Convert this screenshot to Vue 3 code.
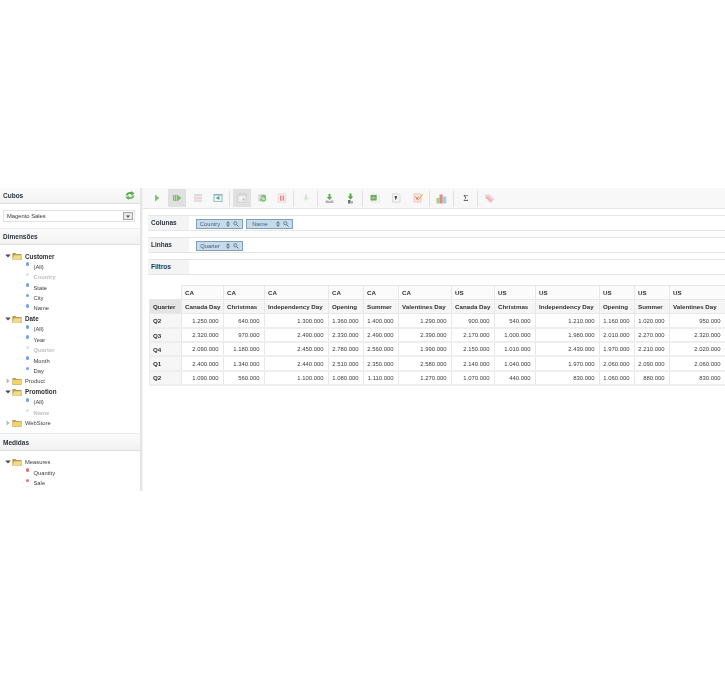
<script setup>
const treeTop = [
  { type: 'open', label: 'Customer', bold: true },
  { type: 'dim', label: '(All)' },
  { type: 'dim', label: 'Country', off: true },
  { type: 'dim', label: 'State' },
  { type: 'dim', label: 'City' },
  { type: 'dim', label: 'Name' },
  { type: 'open', label: 'Date', bold: true },
  { type: 'dim', label: '(All)' },
  { type: 'dim', label: 'Year' },
  { type: 'dim', label: 'Quarter', off: true },
  { type: 'dim', label: 'Month' },
  { type: 'dim', label: 'Day' },
  { type: 'closed', label: 'Product' },
  { type: 'open', label: 'Promotion', bold: true },
  { type: 'dim', label: '(All)' },
  { type: 'dim', label: 'Name', off: true },
  { type: 'closed', label: 'WebStore' }
]
const treeMeasures = [
  { type: 'open', label: 'Measures' },
  { type: 'mea', label: 'Quantity' },
  { type: 'mea', label: 'Sale' }
]
const cols = [
  { c: 'CA', n: 'Canada Day', w: 42 },
  { c: 'CA', n: 'Christmas', w: 41 },
  { c: 'CA', n: 'Independency Day', w: 64 },
  { c: 'CA', n: 'Opening', w: 35 },
  { c: 'CA', n: 'Summer', w: 35 },
  { c: 'CA', n: 'Valentines Day', w: 53 },
  { c: 'US', n: 'Canada Day', w: 43 },
  { c: 'US', n: 'Christmas', w: 41 },
  { c: 'US', n: 'Independency Day', w: 64 },
  { c: 'US', n: 'Opening', w: 35 },
  { c: 'US', n: 'Summer', w: 35 },
  { c: 'US', n: 'Valentines Day', w: 56 }
]
const rows = [
  ['Q2', '1.250.000', '640.000', '1.300.000', '1.360.000', '1.400.000', '1.290.000', '900.000', '540.000', '1.210.000', '1.160.000', '1.020.000', '950.000'],
  ['Q3', '2.320.000', '970.000', '2.490.000', '2.330.000', '2.490.000', '2.390.000', '2.170.000', '1.000.000', '1.980.000', '2.010.000', '2.270.000', '2.320.000'],
  ['Q4', '2.090.000', '1.180.000', '2.450.000', '2.780.000', '2.560.000', '1.990.000', '2.150.000', '1.010.000', '2.430.000', '1.970.000', '2.210.000', '2.020.000'],
  ['Q1', '2.400.000', '1.340.000', '2.440.000', '2.510.000', '2.350.000', '2.580.000', '2.140.000', '1.040.000', '1.970.000', '2.060.000', '2.090.000', '2.060.000'],
  ['Q2', '1.090.000', '560.000', '1.100.000', '1.080.000', '1.110.000', '1.270.000', '1.070.000', '440.000', '830.000', '1.060.000', '880.000', '830.000']
]
const shelves = [
  { label: 'Colunas', chips: ['Country', 'Name'] },
  { label: 'Linhas', chips: ['Quarter'] },
  { label: 'Filtros', chips: [] }
]
</script>

<template>
  <div class="page">
    <div class="app">
      <aside class="side">
        <div class="head first">
          <span>Cubos</span>
          <svg class="sync" width="10" height="9" viewBox="0 0 11 10">
            <path d="M.6 5C1 2 4 .4 6.800 1.200V0l3.800 2.800-3.800 2.400V3.600C5 3 3.400 3.400 2.800 5z" fill="#5cab4e" />
            <path d="M10.400 5C10 8 7 9.600 4.200 8.800V10L.4 7.200l3.800-2.400v1.600C6 7 7.600 6.600 8.200 5z" fill="#6db55f" />
          </svg>
        </div>
        <div class="cube">
          <div class="select">
            <span>Magento Sales</span>
            <i class="drop"><svg width="4" height="3" viewBox="0 0 5 4"><path d="M0 .5h5L2.500 3.500z" fill="#444" /></svg></i>
          </div>
        </div>
        <div class="head"><span>Dimensões</span></div>
        <ul class="tree dims">
          <li v-for="(n, i) in treeTop" :key="i" :class="['node', n.type, { off: n.off, bold: n.bold }]">
            <template v-if="n.type === 'open' || n.type === 'closed'">
              <svg class="arrow" width="6" height="6" viewBox="0 0 6 6">
                <path v-if="n.type === 'open'" d="M.3 1.500h5.400L3 4.600z" fill="#4a4a4a" />
                <path v-else d="M1.600.4 4.600 3 1.600 5.600z" fill="#b4b4b4" />
              </svg>
              <svg class="folder" width="10" height="8" viewBox="0 0 10 8">
                <path d="M.4 1h3l.8.9h5.400V7.700H.4z" fill="#b99a4a" />
                <path v-if="n.type === 'open'" d="M2 3.200h7.800L8.400 7.700H.6z" fill="#f3d98a" />
                <path v-else d="M.9 2.800h8.200v4.600H.9z" fill="#f1d26b" />
              </svg>
            </template>
            <i v-else class="dot"></i>
            <span>{{ n.label }}</span>
          </li>
        </ul>
        <div class="head gap"><span>Medidas</span></div>
        <ul class="tree meas">
          <li v-for="(n, i) in treeMeasures" :key="i" :class="['node', n.type]">
            <template v-if="n.type === 'open'">
              <svg class="arrow" width="6" height="6" viewBox="0 0 6 6"><path d="M.3 1.500h5.400L3 4.600z" fill="#4a4a4a" /></svg>
              <svg class="folder" width="10" height="8" viewBox="0 0 10 8">
                <path d="M.4 1h3l.8.9h5.400V7.700H.4z" fill="#b99a4a" />
                <path d="M2 3.200h7.800L8.400 7.700H.6z" fill="#f3d98a" />
              </svg>
            </template>
            <i v-else class="dot"></i>
            <span>{{ n.label }}</span>
          </li>
        </ul>
      </aside>

      <i class="divider"></i>

      <main class="main">
        <div class="toolbar">
          <div class="grp g1">
            <button class="btn"><svg width="10" height="10" viewBox="0 0 10 10"><path d="M3 1.500 7.500 5 3 8.500z" fill="#7cc76c" /></svg></button>
            <button class="btn on"><svg width="10" height="10" viewBox="0 0 10 10"><path d="M1 2h1.400v6H1zM3 2h1.400v6H3zM5 1.500 9.400 5 5 8.500z" fill="#74c064" /></svg></button>
            <button class="btn"><svg width="10" height="10" viewBox="0 0 10 10"><path d="M1 1h8v2.400H1z" fill="#dcdcdc" /><path d="M1 3.800h8v2.200H1z" fill="#f4d4d4" /><path d="M1 6.400h8V9H1z" fill="#e0e0e0" /></svg></button>
            <button class="btn"><svg width="10" height="10" viewBox="0 0 10 10"><path d="M.5 1h9v8h-9z" fill="#8ab3d8" /><path d="M1.500 2.600h7v5.600h-7z" fill="#f4f8fb" /><path d="M6.400 3v4L2.600 5z" fill="#5cb04c" /></svg></button>
          </div>
          <i class="sep"></i>
          <div class="grp g2">
            <button class="btn on"><svg width="10" height="10" viewBox="0 0 10 10"><path d="M1 .8h8v8.400H1z" fill="#f2f2f2" stroke="#c4c4c4" stroke-width=".7" /><path d="M1 1h8v2H1z" fill="#d8d8d8" /><path d="M5.500 5.500h2v2h-2z" fill="#b8b8b8" /></svg></button>
            <button class="btn"><svg width="10" height="10" viewBox="0 0 10 10"><path d="M1 1h7v7.600H1z" fill="#dedede" /><path d="M9.600 5.600A3.200 3.200 0 0 1 4 7.600L3 8.600V5.400h3.200L5.200 6.500a1.900 1.900 0 0 0 3.200-.9zM3.400 4.400A3.200 3.200 0 0 1 9 2.800V5.400H6l1-1A1.900 1.900 0 0 0 4.600 4.400z" fill="#7cc26f" /></svg></button>
            <button class="btn"><svg width="10" height="10" viewBox="0 0 10 10"><path d="M1.200.8h7.600v8.400H1.200z" fill="#f6f0f0" stroke="#e0d4d4" stroke-width=".7" /><path d="M3 2.400h1.500v5.400H3zM5.600 2.400h1.500v5.400H5.600z" fill="#ea8484" /></svg></button>
          </div>
          <i class="sep"></i>
          <div class="grp">
            <button class="btn"><svg width="10" height="10" viewBox="0 0 10 10"><path d="M4 1.500h2v3h2L5 8 2 4.500h2z" fill="#d2e9ce" /></svg></button>
          </div>
          <i class="sep"></i>
          <div class="grp g4">
            <button class="btn"><svg width="11" height="11" viewBox="0 0 11 11"><path d="M4.500 1h2v3h1.800L5.500 7 2.700 4h1.800z" fill="#5aae4c" /><path d="M1.500 7.500h2.800L5.500 8.700 6.700 7.500h2.800V10h-8z" fill="#b4b4b4" /></svg></button>
            <button class="btn"><svg width="11" height="11" viewBox="0 0 11 11"><path d="M4.500 .5h2v3h1.800L5.500 6.500 2.700 3.500h1.800z" fill="#4ca63e" /><path d="M3 7h2.500v3.500H3z" fill="#6e6e6e" /><path d="M5.500 8h2.500v2.500H5.500z" fill="#acacac" /></svg></button>
          </div>
          <i class="sep"></i>
          <div class="grp g5">
            <button class="btn"><svg width="10" height="10" viewBox="0 0 10 10"><path d="M2 .8h6L9.500 2v7.200H2z" fill="#f6f6f6" stroke="#dcdcdc" stroke-width=".6" /><path d="M.5 2h6.200v5.500H.5z" fill="#6cad5c" /><path d="M1.800 4.500h3.500v.8H1.800z" fill="#d8eed4" /></svg></button>
            <button class="btn"><svg width="10" height="10" viewBox="0 0 10 10"><path d="M1.500.8h6L9 2.300v6.900H1.500z" fill="#f4f4f4" stroke="#cfcfcf" stroke-width=".7" /><path d="M3.800 3h2v2L4.700 6.800H4l.6-1.800h-.8z" fill="#3a3a3a" /></svg></button>
            <button class="btn"><svg width="10" height="10" viewBox="0 0 10 10"><path d="M1 1h7v8H1z" fill="#fae9e4" stroke="#e2b8aa" stroke-width=".7" /><path d="M2.500 3.500 4 6.500 5.500 3.500" fill="none" stroke="#e8786a" stroke-width="1" /><path d="M9.500 1 5 6.500l-.7 1.200 1.300-.5L10 2z" fill="#efb04a" /></svg></button>
          </div>
          <i class="sep"></i>
          <div class="grp">
            <button class="btn"><svg width="11" height="11" viewBox="0 0 11 11"><path d="M.5 5h3v5.500h-3z" fill="#a6d184" /><path d="M3.500 1.500h3.200v9H3.500z" fill="#e58a80" /><path d="M6.700 3.500h3.600v7H6.700z" fill="#a2cdec" /></svg></button>
          </div>
          <i class="sep"></i>
          <div class="grp">
            <button class="btn"><span class="sigma">Σ</span></button>
          </div>
          <i class="sep"></i>
          <div class="grp">
            <button class="btn"><svg width="11" height="11" viewBox="0 0 11 11"><path d="M1 1.500h4.500l5 5-3.800 3.800-5.700-5z" fill="#f4d0d4" /><path d="M3.500 3.500 8 7.500 6.800 8.700 2.600 5z" fill="#eeaab0" /><circle cx="2.600" cy="2.800" r=".7" fill="#dcdcdc" /></svg></button>
          </div>
        </div>

        <div class="shelves">
          <div v-for="s in shelves" :key="s.label" class="shelf">
            <div class="shelf-label">{{ s.label }}</div>
            <div class="shelf-body">
              <div v-for="c in s.chips" :key="c" class="chip">
                <span class="chip-text">{{ c }}</span>
                <svg width="4" height="6" viewBox="0 0 4 6"><path d="M2 0 4 2.400H0zM2 6 0 3.600h4z" fill="#6b7a86" /></svg>
                <svg width="6" height="6" viewBox="0 0 6 6"><circle cx="2.300" cy="2.300" r="1.600" fill="none" stroke="#5a6a78" stroke-width=".8" /><path d="m3.500 3.500 2 2" stroke="#5a6a78" stroke-width="1" /></svg>
              </div>
            </div>
          </div>
        </div>

        <table class="grid">
          <colgroup>
            <col class="col-q" />
            <col v-for="(c, i) in cols" :key="i" :style="{ width: c.w + 'px' }" />
          </colgroup>
          <thead>
            <tr>
              <th class="blank"></th>
              <th v-for="(c, i) in cols" :key="i" class="top">{{ c.c }}</th>
            </tr>
            <tr>
              <th class="corner">Quarter</th>
              <th v-for="(c, i) in cols" :key="i" class="sub">{{ c.n }}</th>
            </tr>
          </thead>
          <tbody>
            <tr v-for="(r, i) in rows" :key="i">
              <th class="rowh">{{ r[0] }}</th>
              <td v-for="(v, j) in r.slice(1)" :key="j">{{ v }}</td>
            </tr>
          </tbody>
        </table>
      </main>
    </div>
  </div>
</template>

<style scoped>
.page { width: 725px; height: 680px; padding-top: 188px; box-sizing: border-box; overflow: hidden; background: #fff; font-family: "Liberation Sans", Arial, sans-serif; }
.app { display: flex; height: 303px; filter: blur(0.35px); }
.side { width: 140px; flex: none; color: #3a3a3a; }
.divider { width: 3px; flex: none; background: #e6e6e6; border-right: 1px solid #f2f2f2; box-sizing: border-box; }
.main { flex: 1; min-width: 0; }

.head { height: 17px; display: flex; align-items: center; justify-content: space-between; padding: 0 5px 0 3px; box-sizing: border-box; background: linear-gradient(#fbfbfb, #f2f2f2); border-top: 1px solid #ececec; border-bottom: 1px solid #dedede; font-size: 6.500px; font-weight: bold; color: #2c343c; }
.head.first { height: 16px; border-top: 0; }
.head.gap { margin-top: 5px; height: 18px; }
.cube { height: 24px; padding: 6px 5px 0 3px; box-sizing: border-box; }
.select { height: 12px; border: 1px solid #e2e2e2; box-sizing: border-box; display: flex; align-items: center; justify-content: space-between; padding: 0 1px 0 3px; font-size: 5.800px; color: #333; }
.drop { width: 10px; height: 8px; display: flex; align-items: center; justify-content: center; background: #e8e8e8; border: 1px solid #a4a4a4; box-sizing: border-box; }

.tree { list-style: none; margin: 0; padding: 0; }
.dims { padding-top: 6px; }
.meas { padding-top: 5.500px; }
.node { height: 10.440px; display: flex; align-items: center; font-size: 5.800px; color: #3c3c3c; white-space: nowrap; }
.node.open, .node.closed { padding-left: 5px; }
.node.dim, .node.mea { padding-left: 25.500px; }
.node.bold { font-weight: bold; color: #2e2e2e; font-size: 6.300px; }
.node.off { color: #c0c0c0; font-weight: bold; }
.arrow { flex: none; margin-right: 1px; }
.folder { flex: none; margin-right: 3px; }
.dot { width: 3.500px; height: 3.500px; border-radius: 50%; background: #6ea3e8; margin-right: 4.500px; margin-top: -5px; flex: none; }
.off .dot { background: #d5e3f5; }
.mea .dot { background: #ee6f78; }

.toolbar { height: 21px; display: flex; align-items: flex-start; padding: 1px 0 0 5px; box-sizing: border-box; background: #f8f8f8; border-bottom: 1px solid #e4e4e4; }
.grp { display: flex; gap: 2.300px; }
.g2 { gap: 2px; }
.g4 { gap: 3px; }
.g5 { gap: 3.500px; }
.btn { width: 18px; height: 18px; padding: 0; border: 0; background: none; display: flex; align-items: center; justify-content: center; }
.btn.on { background: #e0e0e0; }
.sep { width: 1px; height: 16px; margin: 2px 2.500px 0; background: #e0e0e0; flex: none; }
.sigma { font: 9px "Liberation Serif", serif; color: #444; }

.shelves { padding: 6px 0 0 5px; display: flex; flex-direction: column; gap: 6px; }
.shelf { height: 16px; display: flex; border-top: 1px solid #e6e6e6; border-bottom: 1px solid #e6e6e6; box-sizing: border-box; }
.shelf-label { width: 41px; flex: none; padding-left: 3px; box-sizing: border-box; background: #f4f4f4; font-size: 6.500px; font-weight: bold; color: #2c343c; line-height: 14px; }
.shelf-body { flex: 1; display: flex; align-items: flex-start; gap: 3px; padding: 3px 0 0 7px; }
.chip { width: 47px; height: 10px; box-sizing: border-box; background: #c6dbec; border: 1px solid #7f9fbc; display: flex; align-items: center; justify-content: flex-end; gap: 3px; padding-right: 3px; }
.chip-text { flex: 1; text-align: center; font-size: 5.800px; color: #4b5e70; }

.grid { margin: 10px 0 0 6px; width: 576px; table-layout: fixed; border-collapse: collapse; font-size: 5.900px; }
.col-q { width: 32px; }
.grid th, .grid td { height: 14.200px; padding: 0; border: 1px solid #e8e8e8; box-sizing: border-box; white-space: nowrap; overflow: hidden; }
.grid tbody tr th, .grid tbody tr td { border-bottom: 2px solid #eeeeee; }
.grid th { font-weight: bold; text-align: left; color: #2f2f2f; padding-left: 3px; font-size: 6.200px; }
.grid td { text-align: right; padding-right: 4.500px; color: #3a3a3a; }
.grid .blank { border: 0; background: #fff; }
.grid .top { background: #fbfbfb; }
.grid .sub { background: #f5f5f5; }
.grid .corner { background: #e4e4e4; }
.grid .rowh { background: #f6f6f6; }
</style>
